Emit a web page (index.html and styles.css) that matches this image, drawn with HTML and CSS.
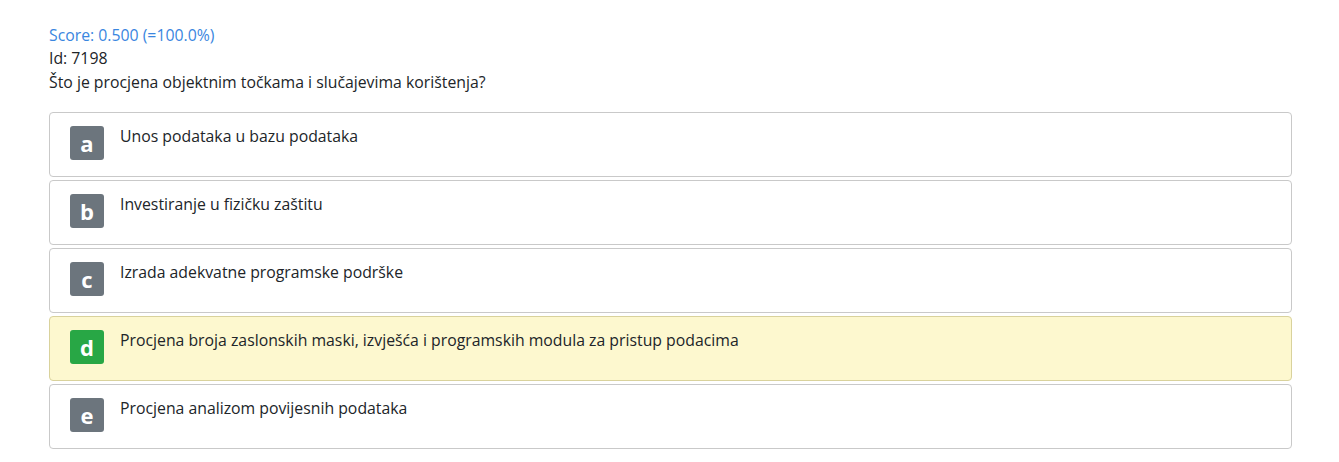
FILE: index.html
```html
<!DOCTYPE html>
<html lang="hr">
<head>
<meta charset="utf-8">
<title>Pitanje 7198</title>
<link rel="stylesheet" href="styles.css">
</head>
<body>
<main class="question">
  <div class="score">Score: 0.500 (=100.0%)</div>
  <div class="qid">Id: 7198</div>
  <div class="qtext">Što je procjena objektnim točkama i slučajevima korištenja?</div>
  <ul class="answers">
    <li class="answer"><span class="badge">a</span><span class="atext">Unos podataka u bazu podataka</span></li>
    <li class="answer"><span class="badge">b</span><span class="atext">Investiranje u fizičku zaštitu</span></li>
    <li class="answer"><span class="badge">c</span><span class="atext">Izrada adekvatne programske podrške</span></li>
    <li class="answer correct"><span class="badge">d</span><span class="atext">Procjena broja zaslonskih maski, izvješća i programskih modula za pristup podacima</span></li>
    <li class="answer"><span class="badge">e</span><span class="atext">Procjena analizom povijesnih podataka</span></li>
  </ul>
</main>
</body>
</html>
```
FILE: styles.css
```css
html, body {
  margin: 0;
  padding: 0;
  background: #ffffff;
}
body {
  font-family: "Open Sans", "Noto Sans", sans-serif;
  font-size: 15.8px;
  color: #212529;
}
.question {
  padding: 23px 47px 0 49px;
}
.score {
  color: #3a86e0;
  line-height: 24px;
}
.qid, .qtext {
  line-height: 23.5px;
}
.answers {
  list-style: none;
  margin: 18px 0 0 0;
  padding: 0;
  display: flex;
  flex-direction: column;
  gap: 3px;
}
.answer {
  display: flex;
  align-items: flex-start;
  gap: 16px;
  height: 65px;
  box-sizing: border-box;
  padding: 13px 20px 0 20px;
  border: 1px solid #c9c9c9;
  border-radius: 4px;
  background: #ffffff;
}
.answer.correct {
  background: #fdf8cf;
  border-color: #d9d29c;
}
.badge {
  flex: 0 0 auto;
  width: 34px;
  height: 34px;
  border-radius: 3px;
  background: #6c757d;
  color: #ffffff;
  font-weight: 700;
  font-size: 22px;
  display: flex;
  align-items: center;
  justify-content: center;
  line-height: 1;
}
.correct .badge {
  background: #28a745;
}
.atext {
  line-height: 20px;
}
```
